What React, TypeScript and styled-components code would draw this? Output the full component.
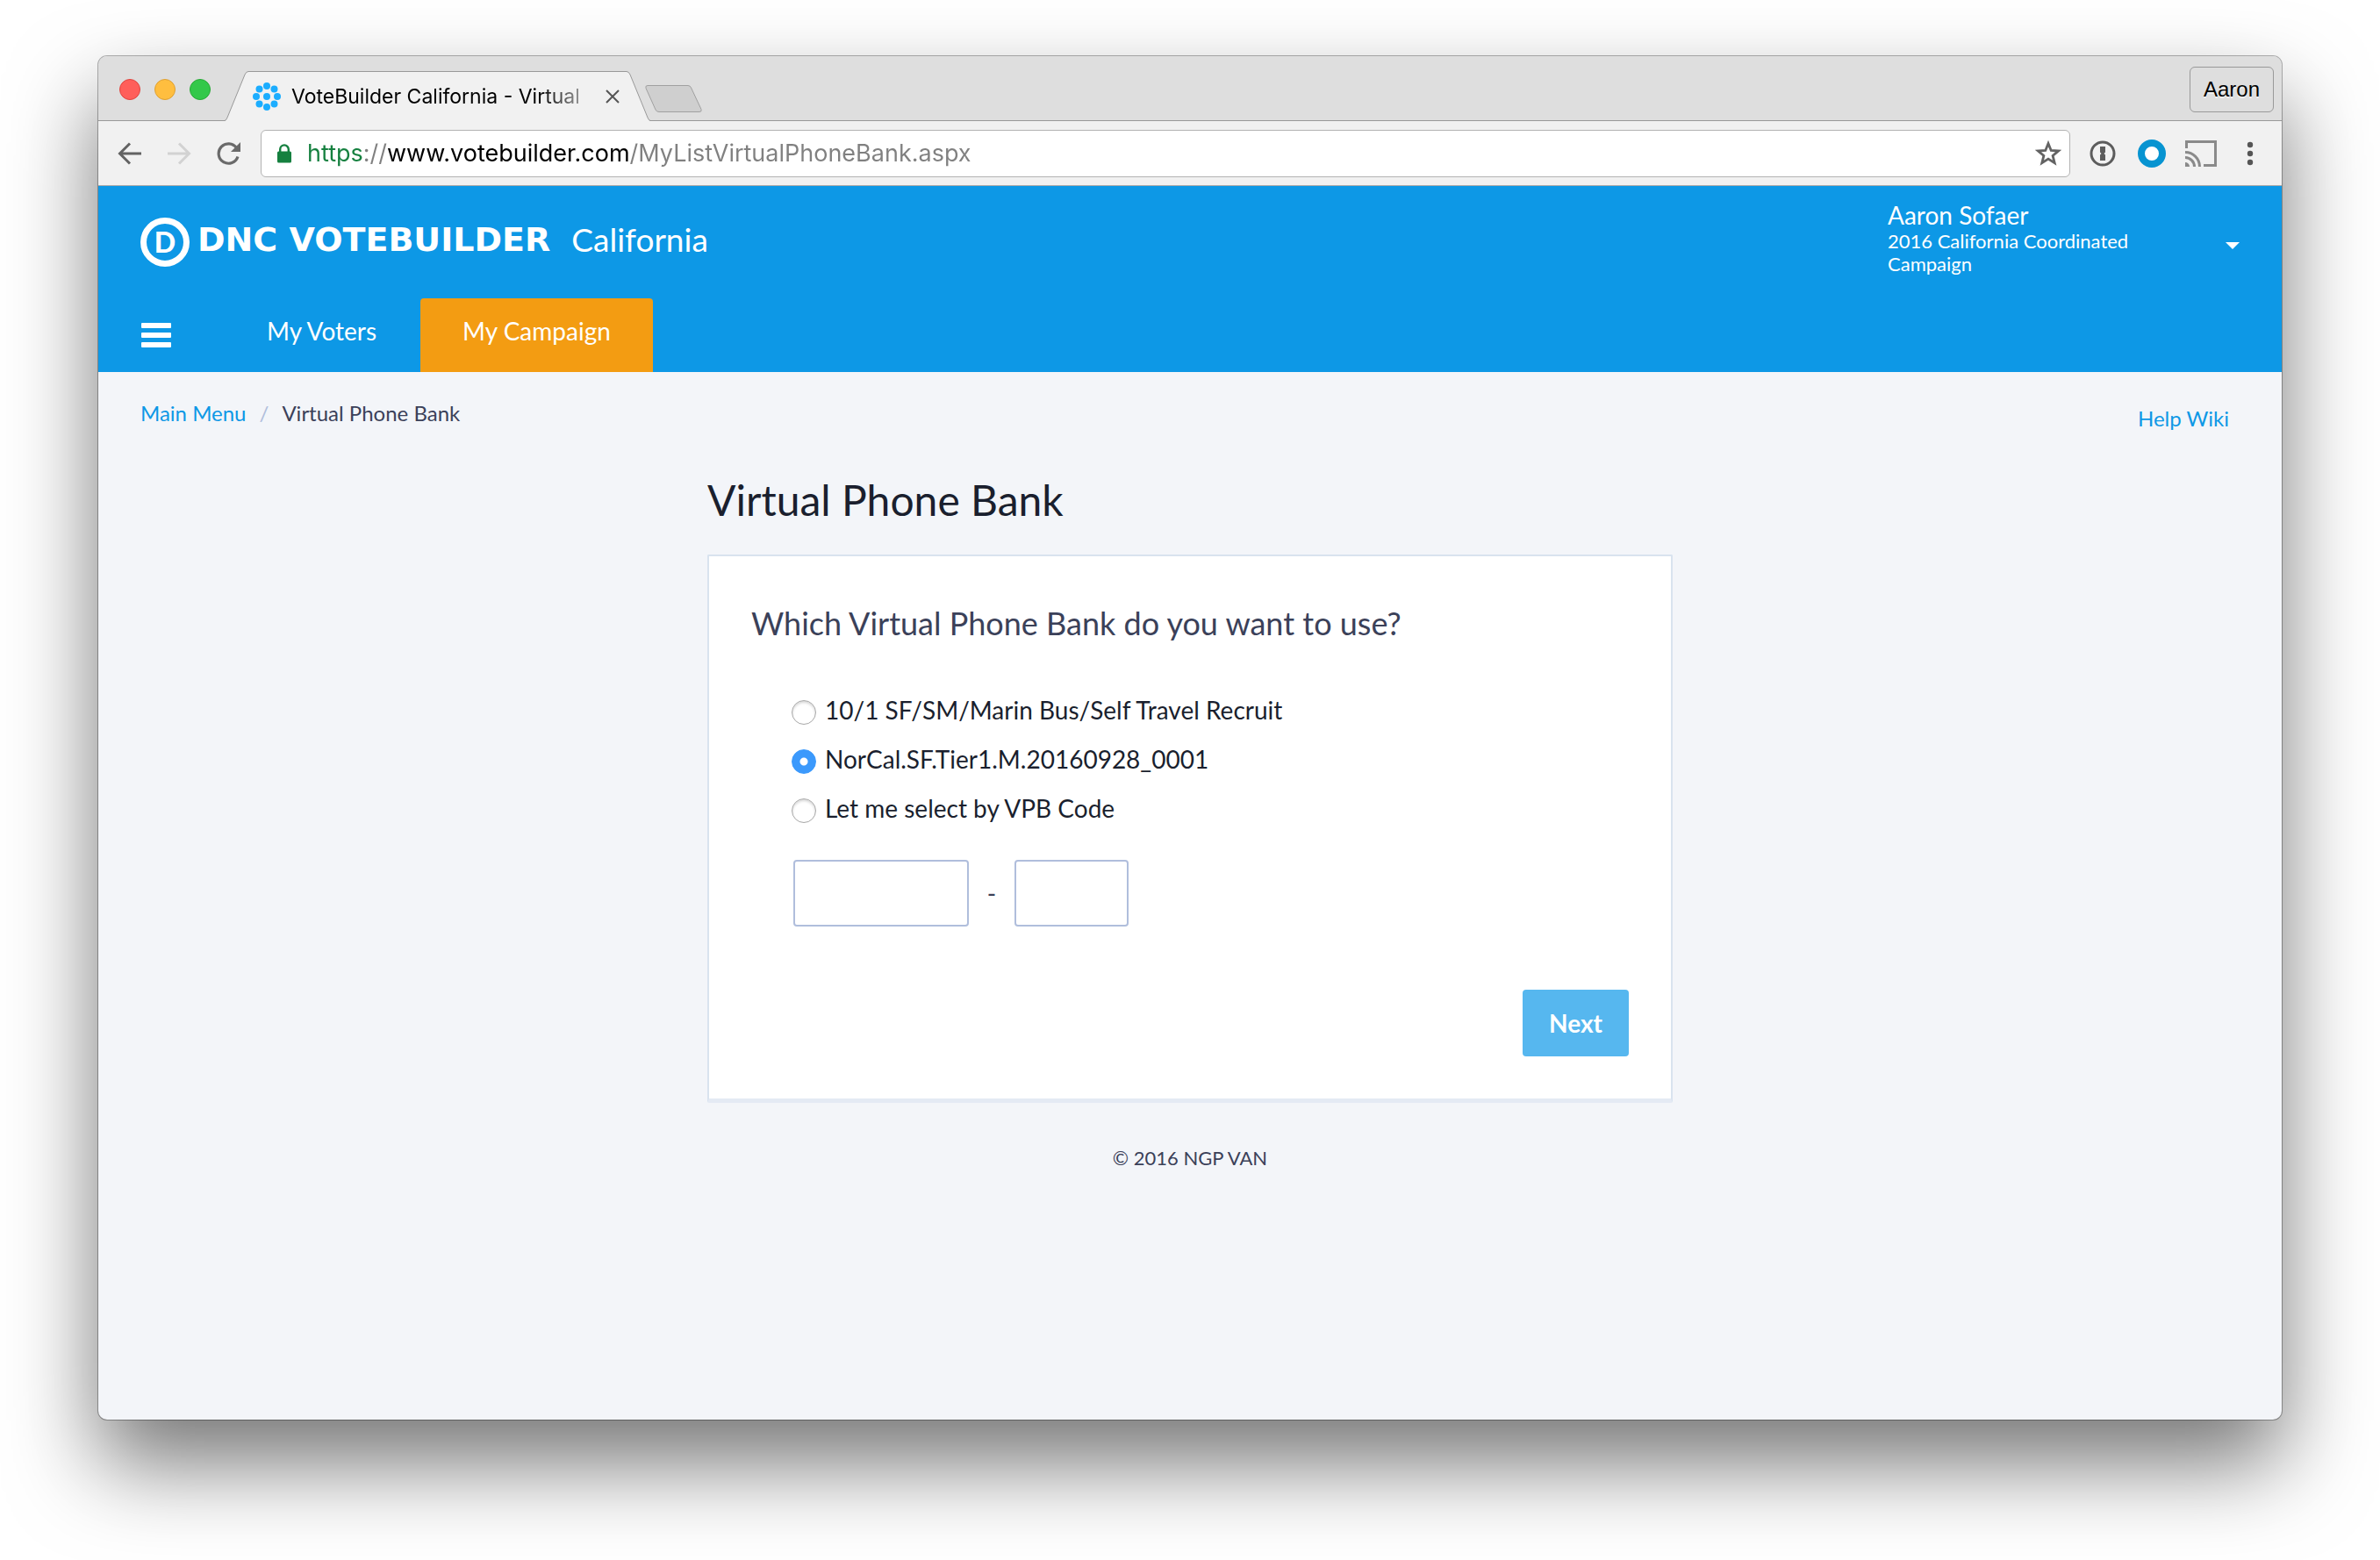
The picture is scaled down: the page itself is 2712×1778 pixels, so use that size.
import React, { useMemo, useState } from "react";
import styled, { createGlobalStyle } from "styled-components";

const lato = 'Lato, "Open Sans", sans-serif';
const chromeFont = 'Inter, "Liberation Sans", sans-serif';

const GlobalStyle = createGlobalStyle`
  *, *::before, *::after { box-sizing: border-box; }
  body { margin: 0; background: #fff; font-family: ${lato}; }
  button { border: 0; padding: 0; background: none; font: inherit; color: inherit; cursor: pointer; }
  a { text-decoration: none; }
  svg { display: block; }
`;

/* Desktop and browser window */

const Desktop = styled.div`
  display: flex;
  min-height: 100vh;
  padding: 64px 112px 160px;
  overflow: hidden;
`;

const BrowserWindow = styled.div`
  flex: 1;
  min-width: 0;
  display: flex;
  flex-direction: column;
  border-radius: 10px;
  background: #f3f5f9;
  box-shadow: 0 0 0 1px rgba(0, 0, 0, 0.3), 0 50px 100px rgba(0, 0, 0, 0.54);
`;

const TabStrip = styled.div`
  display: flex;
  align-items: flex-end;
  height: 74px;
  padding: 2px 9px 0 24px;
  border-radius: 10px 10px 0 0;
  background: #dedede;
  box-shadow: inset 0 -1px #999;
`;

const Lights = styled.div`
  display: flex;
  gap: 16px;
  align-self: center;
  margin-right: 16px;
`;

const Light = styled.button<{ $fill: string; $edge: string }>`
  width: 24px;
  height: 24px;
  border: 1px solid ${(p) => p.$edge};
  border-radius: 50%;
  background: ${(p) => p.$fill};
`;

const Tab = styled.div`
  display: flex;
  height: 57px;
`;

const TabBody = styled.div`
  display: flex;
  align-items: center;
  width: 431px;
  padding: 0 8px 0 5px;
  border-top: 1px solid #999;
  background: #f1f1f1;
`;

const TabTitle = styled.span`
  flex: 1;
  margin-left: 12px;
  overflow: hidden;
  white-space: nowrap;
  font: 23px/32px ${chromeFont};
  color: #000;
  mask-image: linear-gradient(to right, #000 82%, transparent 104%);
`;

const CloseButton = styled.button`
  margin-left: 14px;
`;

const NewTab = styled.button`
  margin: 0 auto 9px -7px;
`;

const ProfileButton = styled.button`
  align-self: center;
  height: 52px;
  padding: 0 15px;
  border: 1px solid #999;
  border-radius: 6px;
  font: 24px/32px "Liberation Sans", Arial, sans-serif;
  color: #000;
  text-shadow: 0 2px #f0f0f0;
`;

const Toolbar = styled.div`
  display: flex;
  align-items: center;
  gap: 17px;
  height: 74px;
  padding: 0 17px 0 22px;
  border-bottom: 1px solid #aaa;
  background: #f1f1f1;
`;

const NavButtons = styled.div`
  display: flex;
  gap: 28px;
  margin-right: 6px;
`;

const ToolButton = styled.button<{ $width: number }>`
  display: flex;
  justify-content: center;
  width: ${(p) => p.$width}px;
`;

const AddressBar = styled.div`
  flex: 1;
  display: flex;
  align-items: center;
  height: 54px;
  padding: 0 8px 0 18px;
  border: 1px solid #b3b3b3;
  border-radius: 6px;
  background: #fff;
`;

const AddressInput = styled.input`
  flex: 1;
  min-width: 0;
  height: 40px;
  margin-left: 18px;
  padding: 0;
  border: 0;
  outline: 0;
  font: 27px/40px ${chromeFont};
  color: transparent;
  background-clip: text;
`;

/* Site header */

const SiteHeader = styled.header`
  background: #0d98e6;
  color: #fff;
`;

const HeaderTop = styled.div`
  display: flex;
  align-items: flex-start;
  justify-content: space-between;
  min-height: 128px;
  padding: 16px 48px;
`;

const Brand = styled.a`
  display: flex;
  align-items: flex-start;
  margin-top: 20px;
  color: #fff;
`;

const BrandMark = styled.span`
  display: flex;
  align-items: center;
  justify-content: center;
  width: 56px;
  height: 56px;
  border: 7px solid #fff;
  border-radius: 50%;
  font-size: 32px;
  font-weight: 900;
  line-height: 40px;
`;

const BrandName = styled.span`
  margin-left: 9px;
  font-family: "DejaVu Sans", Verdana, sans-serif;
  font-size: 38px;
  font-weight: 700;
  line-height: 50px;
`;

const BrandState = styled.span`
  margin-left: 24px;
  font-size: 37px;
  line-height: 50px;
`;

const UserMenu = styled.button`
  display: flex;
  align-items: center;
  justify-content: space-between;
  width: 401px;
  text-align: left;
`;

const UserName = styled.span`
  display: block;
  font-size: 28px;
  line-height: 34px;
`;

const UserCampaign = styled.span`
  display: block;
  max-width: 320px;
  font-size: 22px;
  line-height: 26px;
`;

const Caret = styled.span`
  margin-top: 18px;
  border: 8px solid transparent;
  border-top-color: #fff;
  border-bottom: 0;
`;

const SiteNav = styled.nav`
  display: flex;
  align-items: center;
  gap: 2px;
  padding: 0 49px;
`;

const MenuButton = styled.button`
  display: grid;
  gap: 5px;
  width: 34px;
  margin-right: 59px;
`;

const MenuBar = styled.span`
  height: 6px;
  border-radius: 1px;
  background: #fff;
`;

const NavTab = styled.a<{ $active?: boolean }>`
  padding: 20px 48px 30px;
  border-radius: 4px 4px 0 0;
  background: ${(p) => (p.$active ? "#f39c12" : "transparent")};
  font-size: 28px;
  line-height: 34px;
  color: #fff;
`;

/* Page content */

const Content = styled.main`
  padding: 32px 48px 48px;
`;

const TopLinks = styled.div`
  display: flex;
  justify-content: space-between;
  font-size: 24px;
  line-height: 30px;
`;

const Crumbs = styled.nav`
  display: flex;
  gap: 15px;
  color: #3b4159;
`;

const TextLink = styled.a`
  color: #0d98e6;
`;

const HelpLink = styled(TextLink)`
  padding: 6px 12px 0 0;
`;

const Slash = styled.span`
  color: #b0bedc;
`;

const Column = styled.div`
  max-width: 1100px;
  margin: 48px auto 0;
`;

const PageTitle = styled.h1`
  margin: 0 0 32px;
  font-size: 48px;
  font-weight: 400;
  line-height: 60px;
  color: #1a1f2e;
`;

const Card = styled.form`
  padding: 52px 48px 48px;
  border: 2px solid #d9e3ef;
  border-bottom: 5px solid #e4eaf4;
  border-radius: 2px;
  background: #fff;
`;

const Choices = styled.fieldset`
  display: grid;
  gap: 22px;
  min-width: 0;
  margin: 0;
  padding: 0 0 0 46px;
  border: 0;
`;

const Question = styled.legend`
  margin: 0 0 58px -46px;
  padding: 0;
  font-size: 36px;
  line-height: 48px;
  color: #3b4159;
`;

const Choice = styled.label`
  display: flex;
  align-items: flex-start;
  gap: 10px;
  font-size: 28px;
  line-height: 34px;
  color: #1a1f2e;
`;

const Radio = styled.input`
  appearance: none;
  flex: none;
  width: 28px;
  height: 28px;
  margin: 6px 0 0;
  border: 1px solid #a8a8a8;
  border-radius: 50%;
  background: #fff;
  box-shadow: inset 0 2px 3px rgba(0, 0, 0, 0.16);

  &:checked {
    border-color: #3b99fc;
    background: radial-gradient(circle, #fff 4px, #3b99fc 5px);
    box-shadow: none;
  }
`;

const CodeRow = styled.div`
  display: flex;
  align-items: center;
  margin-top: 42px;
  padding-left: 48px;
  font-size: 28px;
  line-height: 34px;
  color: #3b4159;
`;

const CodeInput = styled.input<{ $width: number }>`
  width: ${(p) => p.$width}px;
  height: 76px;
  padding: 0 16px;
  border: 2px solid #b0bedc;
  border-radius: 4px;
  background: #fff;
  font: 28px/34px ${lato};
  color: #1a1f2e;
`;

const Dash = styled.span`
  width: 52px;
  text-align: center;
`;

const Actions = styled.div`
  display: flex;
  justify-content: flex-end;
  margin-top: 72px;
`;

const NextButton = styled.button`
  height: 76px;
  padding: 0 30px;
  border-radius: 4px;
  background: #56b7ef;
  font-size: 28px;
  font-weight: 700;
  color: #fff;
`;

const Footer = styled.footer`
  margin-top: 50px;
  text-align: center;
  font-size: 22px;
  line-height: 26px;
  color: #3b4159;
`;

/* The address bar is one text field whose scheme, host and path are tinted separately. */
const addressParts = [
  { text: "https", color: "#15803f" },
  { text: "://", color: "#808080" },
  { text: "www.votebuilder.com", color: "#000" },
  { text: "/MyListVirtualPhoneBank.aspx", color: "#808080" },
];
const address = addressParts.map((part) => part.text).join("");

const addressTint = () => {
  const ctx = document.createElement("canvas").getContext("2d");
  if (!ctx) return "linear-gradient(#000, #000)";
  ctx.font = `27px ${chromeFont}`;
  let typed = "";
  let from = 0;
  const stops = addressParts.map((part) => {
    typed += part.text;
    const to = Math.round(ctx.measureText(typed).width);
    const stop = `${part.color} ${from}px ${to}px`;
    from = to;
    return stop;
  });
  return `linear-gradient(to right, ${stops.join(", ")})`;
};

const petals = Array.from({ length: 8 }, (_, i) => {
  const angle = (i * Math.PI) / 4;
  return { cx: 16 + 12 * Math.cos(angle), cy: 16 + 12 * Math.sin(angle) };
});

const Favicon = () => (
  <svg width="32" height="32" viewBox="0 0 32 32" fill="#1badff" aria-hidden="true">
    <circle cx="16" cy="16" r="4" />
    {petals.map((p, i) => (
      <circle key={i} cx={p.cx} cy={p.cy} r="4" />
    ))}
  </svg>
);

const TabEdge = ({ flip }: { flip?: boolean }) => (
  <svg width="27" height="57" viewBox="0 0 27 57" aria-hidden="true">
    <g transform={flip ? "matrix(-1 0 0 1 27 0)" : undefined}>
      <path d="M0 57Q2 56 3 53L23 4Q24.500 0.500 27 0.500V57Z" fill="#f1f1f1" />
      <path d="M0 56.500Q2 56 3 53L23 4Q24.500 0.500 27 0.500" fill="none" stroke="#999" />
    </g>
  </svg>
);

const BackArrow = ({ color, forward }: { color: string; forward?: boolean }) => (
  <svg width="28" height="28" viewBox="0 0 28 28" fill="none" stroke={color} strokeWidth="3" aria-hidden="true">
    <path d={forward ? "M1 14H25M14 2.500L25.500 14L14 25.500" : "M27 14H3M14 2.500L2.500 14L14 25.500"} />
  </svg>
);

const choices = [
  "10/1 SF/SM/Marin Bus/Self Travel Recruit",
  "NorCal.SF.Tier1.M.20160928_0001",
  "Let me select by VPB Code",
];

export default function App() {
  const [selected, setSelected] = useState(1);
  const tint = useMemo(addressTint, []);

  return (
    <>
      <GlobalStyle />
      <Desktop>
        <BrowserWindow>
          <TabStrip>
            <Lights>
              <Light aria-label="Close window" $fill="#ff5f5a" $edge="#e0443e" />
              <Light aria-label="Minimize window" $fill="#ffbe3f" $edge="#dea032" />
              <Light aria-label="Zoom window" $fill="#33c84a" $edge="#27aa35" />
            </Lights>
            <Tab>
              <TabEdge />
              <TabBody>
                <Favicon />
                <TabTitle>VoteBuilder California - Virtual</TabTitle>
                <CloseButton aria-label="Close tab">
                  <svg width="16" height="16" viewBox="0 0 16 16" stroke="#555" strokeWidth="2" aria-hidden="true">
                    <path d="M1 1L15 15M15 1L1 15" />
                  </svg>
                </CloseButton>
              </TabBody>
              <TabEdge flip />
            </Tab>
            <NewTab aria-label="New tab">
              <svg width="67" height="33" viewBox="0 0 67 33" aria-hidden="true">
                <path
                  d="M4 1.500H50Q52.500 1.500 53.500 4L65 28.500Q66 31.500 63 31.500H17Q14 31.500 13 29L2 4.500Q1 1.500 4 1.500Z"
                  fill="#cfcfcf"
                  stroke="#a0a0a0"
                />
              </svg>
            </NewTab>
            <ProfileButton>Aaron</ProfileButton>
          </TabStrip>

          <Toolbar>
            <NavButtons>
              <ToolButton $width={28} aria-label="Back">
                <BackArrow color="#636363" />
              </ToolButton>
              <ToolButton $width={28} aria-label="Forward">
                <BackArrow color="#d2d2d2" forward />
              </ToolButton>
              <ToolButton $width={28} aria-label="Reload">
                <svg width="28" height="28" viewBox="0 0 28 28" aria-hidden="true">
                  <path d="M23.500 7.500A11.200 11.200 0 1 0 25 17.500" fill="none" stroke="#6a6a6a" strokeWidth="3.200" />
                  <path d="M28 1V12H17Z" fill="#6a6a6a" />
                </svg>
              </ToolButton>
            </NavButtons>
            <AddressBar>
              <svg width="16" height="22" viewBox="0 0 16 22" aria-hidden="true">
                <rect y="8.500" width="16" height="13" rx="1.500" fill="#15803f" />
                <path d="M3.200 10V6.200A4.800 4.800 0 0 1 12.800 6.200V10" fill="none" stroke="#15803f" strokeWidth="2.400" />
              </svg>
              <AddressInput
                aria-label="Address"
                spellCheck={false}
                defaultValue={address}
                style={{ backgroundImage: tint }}
              />
              <ToolButton $width={32} aria-label="Bookmark this page">
                <svg width="30" height="30" viewBox="0 0 30 30" aria-hidden="true">
                  <path
                    d="M15 3.500L18.200 11.500L26.500 12L20.100 17.400L22.200 25.700L15 21.100L7.800 25.700L9.900 17.400L3.500 12L11.800 11.500Z"
                    fill="none"
                    stroke="#636363"
                    strokeWidth="2.800"
                  />
                </svg>
              </ToolButton>
            </AddressBar>
            <ToolButton $width={40} aria-label="1Password">
              <svg width="30" height="30" viewBox="0 0 30 30" aria-hidden="true">
                <circle cx="15" cy="15" r="13" fill="none" stroke="#5c5c5c" strokeWidth="3" />
                <path d="M12 7H18V13.500L16.500 15L18 16.500V23H12V16.500L13.500 15L12 13.500Z" fill="#5c5c5c" />
              </svg>
            </ToolButton>
            <ToolButton $width={38} aria-label="Extension">
              <svg width="32" height="32" viewBox="0 0 32 32" aria-hidden="true">
                <circle cx="16" cy="16" r="12" fill="#fff" stroke="#0794d1" strokeWidth="8" />
              </svg>
            </ToolButton>
            <ToolButton $width={40} aria-label="Cast">
              <svg width="36" height="30" viewBox="0 0 36 30" fill="none" stroke="#8a8a8a" strokeWidth="3" aria-hidden="true">
                <path d="M1.500 9V1.500H34.500V28.500H21" />
                <path d="M0 13.500A16.500 16.500 0 0 1 16.500 30M0 19.500A10.500 10.500 0 0 1 10.500 30" />
                <path d="M0 25A5 5 0 0 1 5 30H0Z" fill="#8a8a8a" stroke="none" />
              </svg>
            </ToolButton>
            <ToolButton $width={38} aria-label="Chrome menu">
              <svg width="8" height="28" viewBox="0 0 8 28" fill="#555" aria-hidden="true">
                <circle cx="4" cy="4" r="3.200" />
                <circle cx="4" cy="14" r="3.200" />
                <circle cx="4" cy="24" r="3.200" />
              </svg>
            </ToolButton>
          </Toolbar>

          <SiteHeader>
            <HeaderTop>
              <Brand href="#home">
                <BrandMark>D</BrandMark>
                <BrandName>DNC VOTEBUILDER</BrandName>
                <BrandState>California</BrandState>
              </Brand>
              <UserMenu>
                <span>
                  <UserName>Aaron Sofaer</UserName>
                  <UserCampaign>2016 California Coordinated Campaign</UserCampaign>
                </span>
                <Caret />
              </UserMenu>
            </HeaderTop>
            <SiteNav>
              <MenuButton aria-label="Menu">
                <MenuBar />
                <MenuBar />
                <MenuBar />
              </MenuButton>
              <NavTab href="#voters">My Voters</NavTab>
              <NavTab href="#campaign" $active>
                My Campaign
              </NavTab>
            </SiteNav>
          </SiteHeader>

          <Content>
            <TopLinks>
              <Crumbs aria-label="Breadcrumb">
                <TextLink href="#menu">Main Menu</TextLink>
                <Slash>/</Slash>
                <span>Virtual Phone Bank</span>
              </Crumbs>
              <HelpLink href="#help">Help Wiki</HelpLink>
            </TopLinks>
            <Column>
              <PageTitle>Virtual Phone Bank</PageTitle>
              <Card onSubmit={(e) => e.preventDefault()}>
                <Choices>
                  <Question>Which Virtual Phone Bank do you want to use?</Question>
                  {choices.map((label, i) => (
                    <Choice key={label}>
                      <Radio type="radio" name="bank" checked={selected === i} onChange={() => setSelected(i)} />
                      {label}
                    </Choice>
                  ))}
                </Choices>
                <CodeRow>
                  <CodeInput $width={200} type="text" aria-label="VPB code, first part" />
                  <Dash>-</Dash>
                  <CodeInput $width={130} type="text" aria-label="VPB code, second part" />
                </CodeRow>
                <Actions>
                  <NextButton type="submit">Next</NextButton>
                </Actions>
              </Card>
              <Footer>© 2016 NGP VAN</Footer>
            </Column>
          </Content>
        </BrowserWindow>
      </Desktop>
    </>
  );
}
